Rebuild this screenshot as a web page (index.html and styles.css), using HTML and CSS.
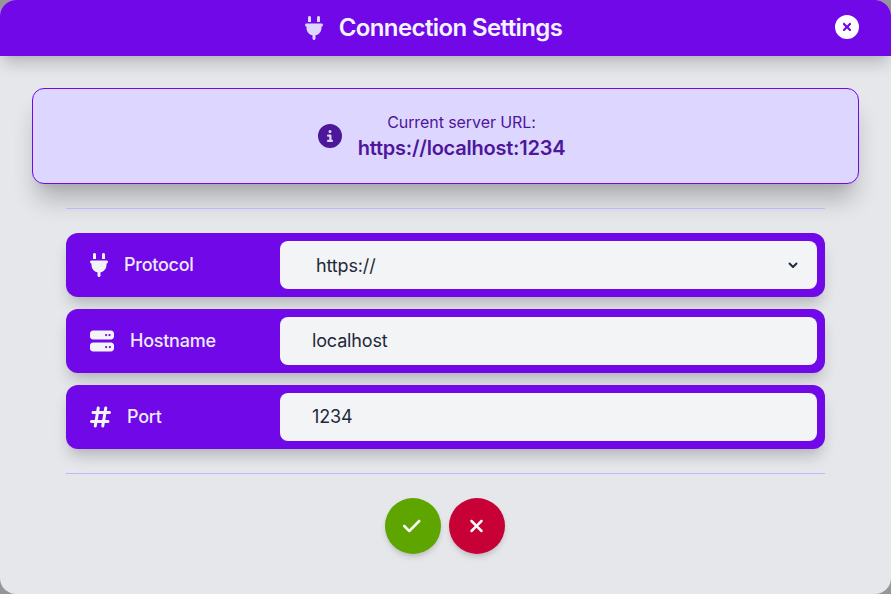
FILE: index.html
```html
<!DOCTYPE html>
<html lang="en">
<head>
<meta charset="utf-8">
<title>Connection Settings</title>
<link rel="stylesheet" href="styles.css">
</head>
<body>
<svg class="defs" aria-hidden="true">
  <symbol id="plug" viewBox="0 0 384 512"><path d="M96 0C78.3 0 64 14.3 64 32v96h64V32c0-17.7-14.3-32-32-32zM288 0c-17.7 0-32 14.3-32 32v96h64V32c0-17.7-14.3-32-32-32zM32 160c-17.7 0-32 14.3-32 32s14.3 32 32 32v32c0 77.4 55 142 128 156.8V480c0 17.7 14.3 32 32 32s32-14.3 32-32V412.8C297 398 352 333.4 352 256V224c17.7 0 32-14.3 32-32s-14.3-32-32-32H32z"/></symbol>
</svg>
<main class="dialog">
  <header class="header">
    <h1 class="title"><svg class="icon plug"><use href="#plug"/></svg><span>Connection Settings</span></h1>
    <button class="close" aria-label="Close"><svg class="icon round" viewBox="0 0 512 512"><path d="M256 512A256 256 0 1 0 256 0a256 256 0 1 0 0 512zM175 175c9.4-9.4 24.6-9.4 33.9 0l47 47 47-47c9.4-9.4 24.6-9.4 33.9 0s9.4 24.6 0 33.9l-47 47 47 47c9.4 9.4 9.4 24.6 0 33.9s-24.6 9.4-33.9 0l-47-47-47 47c-9.4 9.4-24.6 9.4-33.9 0s-9.4-24.6 0-33.9l47-47-47-47c-9.4-9.4-9.4-24.6 0-33.9z"/></svg></button>
  </header>
  <div class="content">
    <section class="info">
      <svg class="icon round" viewBox="0 0 512 512"><path d="M256 512A256 256 0 1 0 256 0a256 256 0 1 0 0 512zM216 336h24V272H216c-13.3 0-24-10.7-24-24s10.7-24 24-24h48c13.3 0 24 10.7 24 24v88h8c13.3 0 24 10.7 24 24s-10.7 24-24 24H216c-13.3 0-24-10.7-24-24s10.7-24 24-24zm40-208a32 32 0 1 1 0 64 32 32 0 1 1 0-64z"/></svg>
      <div class="info-text">
        <span class="info-label">Current server URL:</span>
        <strong class="info-url">https://localhost:1234</strong>
      </div>
    </section>
    <form class="form">
      <div class="row">
        <div class="label"><svg class="icon plug"><use href="#plug"/></svg><span>Protocol</span></div>
        <div class="field select"><span>https://</span><svg class="chevron" viewBox="0 0 10 6"><path d="M1 1l4 4 4-4"/></svg></div>
      </div>
      <div class="row">
        <div class="label"><svg class="icon round" viewBox="0 0 512 512"><path d="M64 32C28.7 32 0 60.7 0 96v64c0 35.3 28.7 64 64 64H448c35.3 0 64-28.7 64-64V96c0-35.3-28.7-64-64-64H64zm280 72a24 24 0 1 1 0 48 24 24 0 1 1 0-48zm48 24a24 24 0 1 1 48 0 24 24 0 1 1 -48 0zM64 288c-35.3 0-64 28.7-64 64v64c0 35.3 28.7 64 64 64H448c35.3 0 64-28.7 64-64V352c0-35.3-28.7-64-64-64H64zm280 72a24 24 0 1 1 0 48 24 24 0 1 1 0-48zm56 24a24 24 0 1 1 48 0 24 24 0 1 1 -48 0z"/></svg><span>Hostname</span></div>
        <div class="field">localhost</div>
      </div>
      <div class="row">
        <div class="label"><svg class="icon hash" viewBox="0 0 448 512"><path d="M181.3 32.4c17.4 2.9 29.2 19.4 26.3 36.8L197.8 128h95.1l11.5-69.3c2.9-17.4 19.4-29.2 36.8-26.3s29.2 19.4 26.3 36.8L357.8 128H416c17.7 0 32 14.3 32 32s-14.3 32-32 32H347.1L325.8 320H384c17.7 0 32 14.3 32 32s-14.3 32-32 32H315.1l-11.5 69.3c-2.9 17.4-19.4 29.2-36.8 26.3s-29.2-19.4-26.3-36.8l9.8-58.7H155.1l-11.5 69.3c-2.9 17.4-19.4 29.2-36.8 26.3s-29.2-19.4-26.3-36.8L90.2 384H32c-17.7 0-32-14.3-32-32s14.3-32 32-32h68.9l21.3-128H64c-17.7 0-32-14.3-32-32s14.3-32 32-32h68.9l11.5-69.3c2.9-17.4 19.4-29.2 36.8-26.3zM187.1 192L165.8 320h95.1l21.3-128H187.1z"/></svg><span>Port</span></div>
        <div class="field">1234</div>
      </div>
    </form>
    <div class="actions">
      <button class="action accept" aria-label="Save"><svg class="icon check" viewBox="0 0 448 512"><path d="M438.6 105.4c12.5 12.5 12.5 32.8 0 45.3l-256 256c-12.5 12.5-32.8 12.5-45.3 0l-128-128c-12.5-12.5-12.5-32.8 0-45.3s32.8-12.5 45.3 0L160 338.7 393.4 105.4c12.5-12.5 32.8-12.5 45.3 0z"/></svg></button>
      <button class="action cancel" aria-label="Cancel"><svg class="icon xmark" viewBox="0 0 384 512"><path d="M342.6 150.6c12.5-12.5 12.5-32.8 0-45.3s-32.8-12.5-45.3 0L192 210.7 86.6 105.4c-12.5-12.5-32.8-12.5-45.3 0s-12.5 32.8 0 45.3L146.7 256 41.4 361.4c-12.5 12.5-12.5 32.8 0 45.3s32.8 12.5 45.3 0L192 301.3 297.4 406.6c12.5 12.5 32.8 12.5 45.3 0s12.5-32.8 0-45.3L237.3 256 342.6 150.6z"/></svg></button>
    </div>
  </div>
</main>
</body>
</html>
```
FILE: styles.css
```css
* { box-sizing: border-box; }
body {
  margin: 0;
  height: 594px;
  overflow: hidden;
  background: #969698;
  font-family: Inter, sans-serif;
  color: #1e2939;
}
button { border: 0; padding: 0; font: inherit; }
.defs { display: none; }
.icon { display: block; flex: none; height: 24px; fill: currentColor; }
.plug { width: 18px; }
.round { width: 24px; }
.hash { width: 21px; }

.dialog {
  height: 594px;
  overflow: hidden;
  border-radius: 16px;
  background: #e5e7eb;
}
.header {
  display: grid;
  grid-template-columns: 24px 1fr 24px;
  align-items: center;
  height: 56px;
  padding: 0 32px;
  background: #7008e7;
  box-shadow: 0 10px 15px -3px rgb(0 0 0 / .2), 0 4px 6px -4px rgb(0 0 0 / .06);
}
.title {
  grid-column: 2;
  display: flex;
  justify-content: center;
  align-items: center;
  gap: 16px;
  margin: 0;
  padding-right: 24px;
  font-size: 24px;
  line-height: 32px;
  font-weight: 600;
  letter-spacing: -.6px;
  color: #f5f3ff;
}
.title .icon { color: #ddd6ff; }
.close { background: none; color: #fff; padding-bottom: 2px; }

.content { padding: 32px; }
.info {
  display: flex;
  justify-content: center;
  align-items: center;
  gap: 16px;
  height: 96px;
  padding-right: 8px;
  border: 1px solid #7008e7;
  border-radius: 12px;
  background: #ddd6ff;
  color: #4d179a;
  box-shadow: 0 20px 25px -5px rgb(0 0 0 / .24), 0 8px 10px -6px rgb(0 0 0 / .07);
}
.info-text { display: flex; flex-direction: column; align-items: center; }
.info-label { font-size: 16px; line-height: 24px; letter-spacing: -.08px; }
.info-url { font-size: 20px; line-height: 28px; font-weight: 600; letter-spacing: -.23px; }

.form {
  display: flex;
  flex-direction: column;
  gap: 12px;
  margin: 24px 34px 0;
  padding: 24px 0;
  border: solid #c4b4ff;
  border-width: 1px 0;
}
.row {
  display: flex;
  height: 64px;
  padding: 8px;
  border-radius: 12px;
  background: #7008e7;
  box-shadow: 0 10px 15px -3px rgb(0 0 0 / .2), 0 4px 6px -4px rgb(0 0 0 / .06);
}
.label {
  display: flex;
  align-items: center;
  gap: 16px;
  width: 206px;
  padding-left: 16px;
  font-size: 18px;
  line-height: 28px;
  font-weight: 500;
  letter-spacing: -.25px;
  color: #ede9fe;
}
.label span { margin-top: -1px; }
.label .icon { color: #f3f4f6; }
.field {
  flex: 1;
  display: flex;
  align-items: center;
  padding: 0 32px;
  border-radius: 8px;
  background: #f3f4f6;
  font-size: 18px;
  line-height: 28px;
  letter-spacing: -.15px;
}
.select { justify-content: space-between; padding: 0 19px 0 36px; }
.select span { padding-top: 2px; }
.chevron { width: 10px; height: 6px; fill: none; stroke: currentColor; stroke-width: 2; }

.actions { display: flex; justify-content: center; gap: 8px; margin-top: 24px; padding-right: 1px; }
.action {
  display: flex;
  justify-content: center;
  align-items: center;
  width: 56px;
  height: 56px;
  border-radius: 50%;
  color: #fff;
  box-shadow: 0 4px 6px -1px rgb(0 0 0 / .15), 0 2px 4px -2px rgb(0 0 0 / .1);
}
.action .icon { height: 20px; }
.check { width: 17.5px; margin-right: 2px; }
.xmark { width: 15px; margin-right: 1px; }
.accept { background: #5ea500; }
.cancel { background: #c70036; }
```
